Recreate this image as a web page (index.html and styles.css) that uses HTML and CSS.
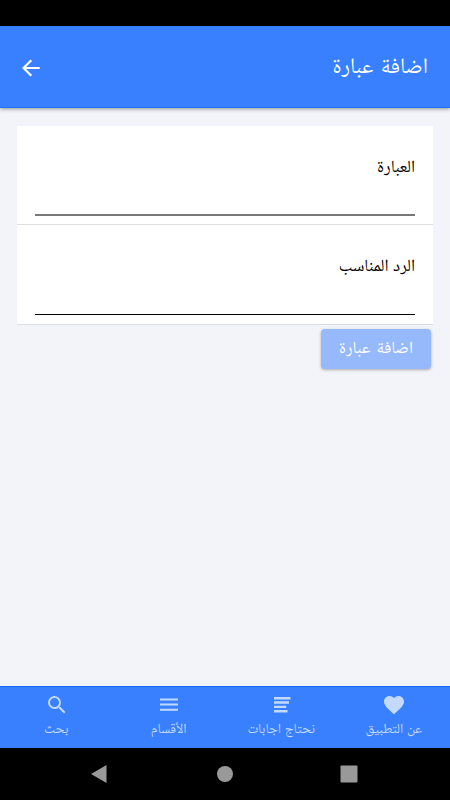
FILE: index.html
```html
<!DOCTYPE html>
<html lang="ar" dir="rtl">
<head>
    <meta charset="UTF-8">
    <title>اضافة عبارة</title>
    <link rel="stylesheet" href="styles.css">
</head>
<body>
<div class="status"></div>
<div class="header">
    <h1>اضافة عبارة</h1>
    <svg class="back" viewBox="0 0 18 18"><path d="M17.7 9H1.6M9.3 1.2L1.5 9l7.8 7.8"/></svg>
</div>

<div class="main">
    <div class="item">
        <label>العبارة</label>
        <div class="line soft"></div>
    </div>
    <div class="item">
        <label>الرد المناسب</label>
        <div class="line"></div>
    </div>
    <button class="submit">اضافة عبارة</button>
</div>

<div class="tabs">
    <div class="tab">
        <svg viewBox="0 0 24 24"><path d="M12 21.35l-1.45-1.32C5.4 15.36 2 12.28 2 8.5 2 5.42 4.42 3 7.5 3c1.74 0 3.41.81 4.5 2.09C13.09 3.81 14.76 3 16.5 3 19.58 3 22 5.42 22 8.5c0 3.78-3.4 6.86-8.55 11.54z"/></svg>
        <span>عن التطبيق</span>
    </div>
    <div class="tab">
        <svg viewBox="0 0 24 24"><path d="M4 4h16.5v2.4H4zM4 8.3h15v2.4H4zM4 12.7h12.2v2.2H4zM4 17h13.5v2.5H4z"/></svg>
        <span>نحتاج اجابات</span>
    </div>
    <div class="tab">
        <svg viewBox="0 0 24 24"><path d="M3 5.5h18v2H3zM3 10.6h18v2H3zM3 15.7h18v2H3z"/></svg>
        <span>الأقسام</span>
    </div>
    <div class="tab">
        <svg viewBox="0 0 24 24"><path d="M15.5 14h-.79l-.28-.27A6.47 6.47 0 0 0 16 9.5 6.5 6.5 0 1 0 9.5 16c1.61 0 3.09-.59 4.23-1.57l.27.28v.79l5 4.99L20.49 19zm-6 0C7.01 14 5 11.99 5 9.5S7.01 5 9.5 5 14 7.01 14 9.5 11.99 14 9.5 14z"/></svg>
        <span>بحث</span>
    </div>
</div>

<div class="nav">
    <svg viewBox="0 0 20 20"><rect x="1.5" y="1.5" width="17" height="17" rx="1"/></svg>
    <svg viewBox="0 0 20 20"><circle cx="10" cy="10" r="8"/></svg>
    <svg viewBox="0 0 20 20"><path d="M0 10L15.5 1v18z"/></svg>
</div>
</body>
</html>
```

FILE: styles.css
```css
*{
    margin: 0;
    padding: 0;
    box-sizing: border-box;
}
body{
    display: flex;
    flex-direction: column;
    height: 800px;
    background: #f3f4f9;
    font-family: "Noto Sans", "Noto Naskh Arabic", "DejaVu Sans", sans-serif;
    overflow: hidden;
}
.status{
    height: 26px;
    background: #000;
}
.header{
    display: flex;
    justify-content: space-between;
    align-items: center;
    height: 82px;
    padding: 0 22px;
    background: #3880ff;
    border-bottom: 1px solid #1a72f5;
    box-shadow: 0 1px 4px rgba(0, 0, 0, .4);
    color: #fff;
}
h1{
    padding-bottom: 6px;
    font-size: 22px;
    font-weight: 400;
    line-height: 30px;
    word-spacing: 2px;
}
.back{
    width: 18px;
    height: 18px;
    margin-top: 3px;
    fill: none;
    stroke: #fff;
    stroke-width: 2.2;
}

.main{
    flex: 1;
    padding: 18px 17px 0;
}
.item{
    display: flex;
    flex-direction: column;
    justify-content: space-between;
    height: 99px;
    padding: 27px 18px 9px;
    background: #fff;
    border-bottom: 1px solid #dedede;
}
.item + .item{
    height: 100px;
}
label{
    font-size: 17.3px;
    line-height: 26px;
    color: #000;
}
.line{
    height: 1px;
    background: #000;
}
.soft{
    height: 2px;
    margin-bottom: -1px;
    background: #777;
}
.submit{
    display: block;
    width: 110px;
    height: 40px;
    margin: 4px 2px 0;
    border: none;
    border-radius: 4px;
    background: #96b9fc;
    box-shadow: 0 1px 3px rgba(0, 0, 0, .3);
    color: #fff;
    font-family: inherit;
    font-size: 16.9px;
    word-spacing: 2px;
}

.tabs{
    display: flex;
    height: 62px;
    background: #3880ff;
    border-top: 1px solid #0f6bf2;
    color: #c3d9ff;
}
.tab{
    flex: 1;
    display: flex;
    flex-direction: column;
    align-items: center;
    padding-top: 6px;
    font-size: 13.9px;
    line-height: 22px;
}
.tab svg{
    width: 24px;
    height: 24px;
    margin-right: -1px;
    fill: currentColor;
}

.nav{
    display: flex;
    justify-content: center;
    gap: 104px;
    height: 52px;
    padding-top: 16px;
    background: #000;
}
.nav svg{
    width: 20px;
    height: 20px;
    fill: #999;
}
```
